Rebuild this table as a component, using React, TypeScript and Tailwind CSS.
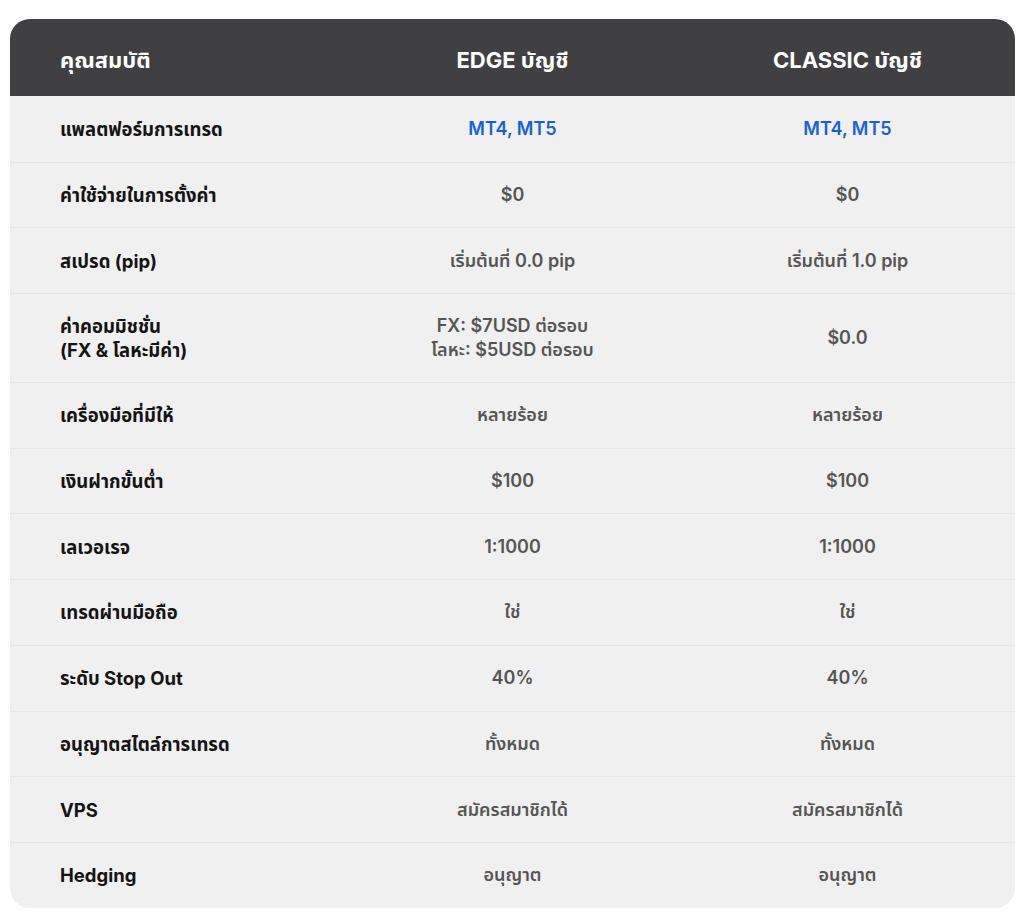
const rows: { label: React.ReactNode; edge: React.ReactNode; classic: React.ReactNode; blue?: boolean; tall?: boolean }[] = [
  { label: "แพลตฟอร์มการเทรด", edge: "MT4, MT5", classic: "MT4, MT5", blue: true },
  { label: "ค่าใช้จ่ายในการตั้งค่า", edge: "$0", classic: "$0" },
  { label: "สเปรด (pip)", edge: "เริ่มต้นที่ 0.0 pip", classic: "เริ่มต้นที่ 1.0 pip" },
  {
    label: (
      <>
        ค่าคอมมิชชั่น
        <br />
        (FX &amp; โลหะมีค่า)
      </>
    ),
    edge: (
      <>
        FX: $7USD ต่อรอบ
        <br />
        โลหะ: $5USD ต่อรอบ
      </>
    ),
    classic: "$0.0",
    tall: true,
  },
  { label: "เครื่องมือที่มีให้", edge: "หลายร้อย", classic: "หลายร้อย" },
  { label: "เงินฝากขั้นต่ำ", edge: "$100", classic: "$100" },
  { label: "เลเวอเรจ", edge: "1:1000", classic: "1:1000" },
  { label: "เทรดผ่านมือถือ", edge: "ใช่", classic: "ใช่" },
  { label: "ระดับ Stop Out", edge: "40%", classic: "40%" },
  { label: "อนุญาตสไตล์การเทรด", edge: "ทั้งหมด", classic: "ทั้งหมด" },
  { label: "VPS", edge: "สมัครสมาชิกได้", classic: "สมัครสมาชิกได้" },
  { label: "Hedging", edge: "อนุญาต", classic: "อนุญาต" },
];

export default function App() {
  return (
    <div className="w-[1024px] h-[922px] bg-white pt-[19px] px-[10px] font-['Inter','Noto_Sans_Thai','Noto_Sans',sans-serif]">
      <div className="w-[1005px] rounded-[20px] overflow-hidden bg-[#f0f0f0]">
        <div className="grid grid-cols-3 h-[77px] items-center pt-[5px] bg-[#404042] text-white text-[22px] font-bold">
          <div className="pl-[50px]">คุณสมบัติ</div>
          <div className="text-center">EDGE บัญชี</div>
          <div className="text-center">CLASSIC บัญชี</div>
        </div>
        {rows.map((r, i) => (
          <div
            key={i}
            className={`grid grid-cols-3 items-center ${r.tall ? "h-[89px]" : "h-[65.7px]"} ${i > 0 ? "border-t border-[#e6e6e6]" : ""}`}
          >
            <div className="pl-[50px] text-[18.5px] font-bold text-[#141414] leading-[24px]">{r.label}</div>
            <div className={`text-center text-[18px] font-semibold leading-[24px] ${r.blue ? "text-[#1a5fd8]" : "text-[#555555]"}`}>{r.edge}</div>
            <div className={`text-center text-[18px] font-semibold leading-[24px] ${r.blue ? "text-[#1a5fd8]" : "text-[#555555]"}`}>{r.classic}</div>
          </div>
        ))}
      </div>
    </div>
  );
}
